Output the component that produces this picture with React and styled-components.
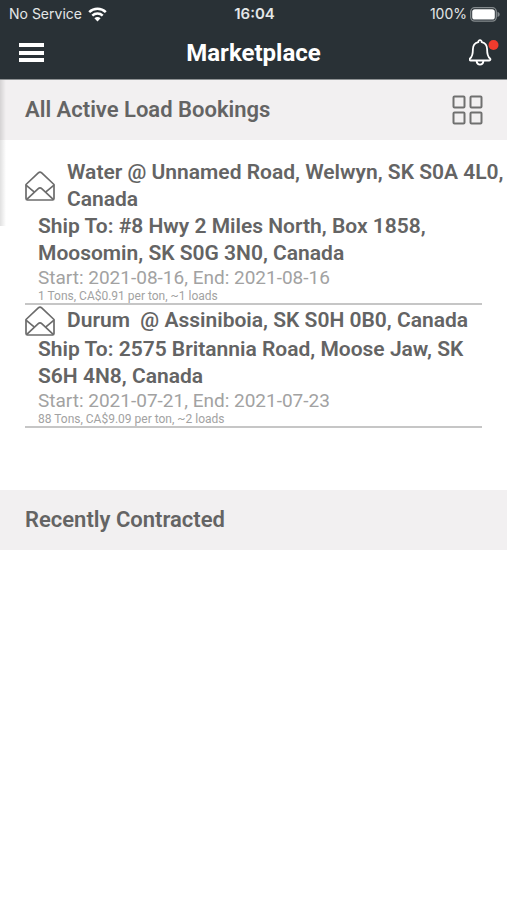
import React from 'react';
import styled, { createGlobalStyle } from 'styled-components';

const GlobalStyle = createGlobalStyle`
  *, *::before, *::after { box-sizing: border-box; }
  body { margin: 0; background: #ffffff; font-family: Roboto, sans-serif; color: #646464; }
  h1, h2, h3, p, ul { margin: 0; padding: 0; }
`;

const Screen = styled.div`
  min-height: 100vh;
  background: #ffffff;
`;

const Header = styled.header`
  background: #293136;
  color: #ffffff;
  border-bottom: 1px solid #8d9193;
`;

const StatusBar = styled.div`
  display: grid;
  grid-template-columns: 1fr auto 1fr;
  align-items: center;
  height: 28px;
  padding: 0 7px 0 9px;
  font-family: Inter, sans-serif;
  font-size: 14px;
  line-height: 20px;
  color: #e4e7e8;
`;

const StatusGroup = styled.div`
  display: flex;
  align-items: center;
  gap: ${({ $gap }) => $gap}px;
  justify-content: ${({ $end }) => ($end ? 'flex-end' : 'flex-start')};
`;

const Clock = styled.time`
  font-size: 15px;
  line-height: 20px;
  font-weight: 600;
`;

const NavBar = styled.nav`
  display: grid;
  grid-template-columns: 1fr auto 1fr;
  align-items: center;
  height: 51px;
  padding: 0 8px 2px;
`;

const IconButton = styled.button`
  display: flex;
  padding: 0 ${({ $inset = 0 }) => $inset}px;
  border: 0;
  background: none;
  color: inherit;
  cursor: pointer;
  justify-self: ${({ $end }) => ($end ? 'end' : 'start')};
`;

const PageTitle = styled.h1`
  font-size: 24px;
  line-height: 28px;
  font-weight: 700;
`;

const Main = styled.main`
  position: relative;
`;

const EdgeShadow = styled.div`
  position: absolute;
  top: 0;
  left: 0;
  width: 6px;
  height: 146px;
  background: linear-gradient(to right, rgba(0, 0, 0, 0.12), rgba(0, 0, 0, 0));
`;

const SectionHeader = styled.div`
  display: flex;
  align-items: center;
  justify-content: space-between;
  height: 60px;
  padding: 0 24px 0 25px;
  background: #f2f0f1;
`;

const SectionTitle = styled.h2`
  font-size: 22px;
  line-height: 28px;
  font-weight: 600;
`;

const BookingList = styled.ul`
  list-style: none;
  padding: 19px 25px 62px;
`;

const Booking = styled.li`
  border-bottom: 2px solid #c6c6c6;
`;

const BookingHead = styled.div`
  display: flex;
  align-items: center;
  gap: 12px;
  min-height: 31px;
  margin-right: -25px;
`;

const BookingTitle = styled.h3`
  flex: 1;
  font-size: 21px;
  line-height: 27px;
  font-weight: 600;
  white-space: pre-wrap;
`;

const BookingBody = styled.div`
  padding-left: 13px;
`;

const ShipTo = styled.p`
  font-size: 21px;
  line-height: 27px;
  font-weight: 600;
`;

const Dates = styled.p`
  font-size: 19px;
  line-height: 22px;
  color: #a2a2a2;
`;

const Terms = styled.p`
  font-size: 12px;
  line-height: 14px;
  color: #a2a2a2;
`;

const WifiIcon = () => (
  <svg width="19" height="15" viewBox="0 0 19 15" fill="none" stroke="#ffffff" strokeWidth="2.5" aria-hidden="true">
    <path d="M1.2 5.2C5.8 .7 13.2 .7 17.8 5.2" />
    <path d="M4.3 8.6C7.2 5.8 11.8 5.8 14.7 8.6" />
    <path d="M9.5 14.4 6.4 11.2C8.1 9.5 10.9 9.5 12.6 11.2Z" fill="#ffffff" stroke="none" />
  </svg>
);

const BatteryIcon = () => (
  <svg width="30" height="15" viewBox="0 0 30 15" aria-hidden="true">
    <rect x="0.7" y="0.7" width="25.6" height="13.4" rx="4" fill="none" stroke="#848a8d" strokeWidth="1.3" />
    <rect x="2.2" y="2.2" width="22.6" height="10.4" rx="2.6" fill="#ffffff" />
    <path d="M27.5 4.8C30.4 6 30.4 8.8 27.5 10Z" fill="#848a8d" />
  </svg>
);

const MenuIcon = () => (
  <svg width="25" height="20" viewBox="0 0 25 20" fill="#ffffff" aria-hidden="true">
    <rect y="0" width="25" height="4" />
    <rect y="8" width="25" height="4" />
    <rect y="15" width="25" height="4" />
  </svg>
);

const BellIcon = () => (
  <svg width="30" height="28" viewBox="0 0 30 28" fill="none" stroke="#ffffff" strokeWidth="1.8" strokeLinejoin="round" aria-hidden="true">
    <path d="M11 1.2a1.7 1.7 0 0 1 1.7 1.9c3.5.8 5.4 3.6 5.4 7.2 0 5 .5 7.4 2.9 9.2.8.7.4 2-.7 2H1.7c-1.1 0-1.5-1.3-.7-2 2.4-1.8 2.9-4.2 2.9-9.2 0-3.6 1.9-6.4 5.4-7.2A1.7 1.7 0 0 1 11 1.2Z" />
    <path d="M7.5 22c.4 2.4 1.6 3.6 3.5 3.6s3.1-1.2 3.5-3.6" />
    <circle cx="24.5" cy="6" r="5" fill="#ef3b2d" stroke="none" />
  </svg>
);

const GridIcon = () => (
  <svg width="31" height="31" viewBox="0 0 31 31" fill="none" stroke="#707070" strokeWidth="2" aria-hidden="true">
    <rect x="1.5" y="1.5" width="11" height="11" rx="1" />
    <rect x="18.5" y="1.5" width="11" height="11" rx="1" />
    <rect x="1.5" y="17.5" width="11" height="11" rx="1" />
    <rect x="18.5" y="17.5" width="11" height="11" rx="1" />
  </svg>
);

const EnvelopeIcon = () => (
  <svg width="30" height="30" viewBox="0 0 30 30" fill="none" stroke="#6c6c6c" strokeWidth="1.7" strokeLinejoin="round" aria-hidden="true">
    <path d="M1 13.5 13.3 1.9Q15 .4 16.7 1.9L29 13.5V27.5Q29 29 27.5 29H2.5Q1 29 1 27.5Z" />
    <path d="M1.5 28.5 13 17.9Q15 16 17 17.9L28.5 28.5" />
    <path d="M1 14.2 9.4 21.2M29 14.2 20.6 21.2" />
  </svg>
);

const bookings = [
  {
    title: 'Water @ Unnamed Road, Welwyn, SK S0A 4L0, Canada',
    shipTo: '#8 Hwy 2 Miles North, Box 1858, Moosomin, SK S0G 3N0, Canada',
    start: '2021-08-16',
    end: '2021-08-16',
    terms: '1 Tons, CA$0.91 per ton, ~1 loads',
  },
  {
    title: 'Durum  @ Assiniboia, SK S0H 0B0, Canada',
    shipTo: '2575 Britannia Road, Moose Jaw, SK S6H 4N8, Canada',
    start: '2021-07-21',
    end: '2021-07-23',
    terms: '88 Tons, CA$9.09 per ton, ~2 loads',
  },
];

export default function App() {
  return (
    <Screen>
      <GlobalStyle />
      <Header>
        <StatusBar>
          <StatusGroup $gap={6}>
            <span>No Service</span>
            <WifiIcon />
          </StatusGroup>
          <Clock>16:04</Clock>
          <StatusGroup $gap={3} $end>
            <span>100%</span>
            <BatteryIcon />
          </StatusGroup>
        </StatusBar>
        <NavBar>
          <IconButton type="button" aria-label="Menu" $inset={11}>
            <MenuIcon />
          </IconButton>
          <PageTitle>Marketplace</PageTitle>
          <IconButton type="button" aria-label="Notifications" $end>
            <BellIcon />
          </IconButton>
        </NavBar>
      </Header>
      <Main>
        <SectionHeader>
          <SectionTitle>All Active Load Bookings</SectionTitle>
          <IconButton type="button" aria-label="Grid view">
            <GridIcon />
          </IconButton>
        </SectionHeader>
        <BookingList>
          {bookings.map((b) => (
            <Booking key={b.title}>
              <BookingHead>
                <EnvelopeIcon />
                <BookingTitle>{b.title}</BookingTitle>
              </BookingHead>
              <BookingBody>
                <ShipTo>{`Ship To: ${b.shipTo}`}</ShipTo>
                <Dates>{`Start: ${b.start}, End: ${b.end}`}</Dates>
                <Terms>{b.terms}</Terms>
              </BookingBody>
            </Booking>
          ))}
        </BookingList>
        <SectionHeader>
          <SectionTitle>Recently Contracted</SectionTitle>
        </SectionHeader>
        <EdgeShadow />
      </Main>
    </Screen>
  );
}
